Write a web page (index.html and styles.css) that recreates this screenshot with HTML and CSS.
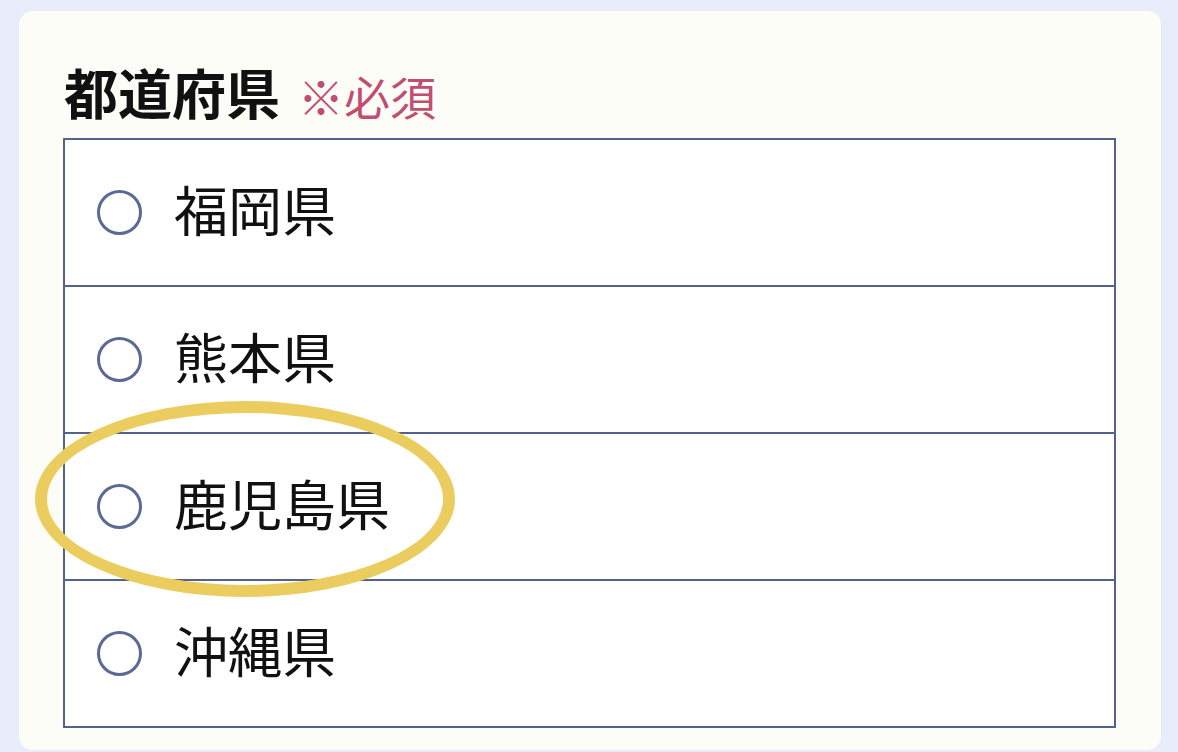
FILE: index.html
```html
<!DOCTYPE html>
<html lang="ja">

<head>
    <meta charset="UTF-8">
    <meta name="viewport" content="width=device-width, initial-scale=1.0">
    <title>都道府県</title>
    <link rel="stylesheet" href="styles.css">
</head>

<body>
    <div class="form-card">
        <div class="field-label">
            <span class="label-text">都道府県</span>
            <span class="required">※必須</span>
        </div>

        <div class="radio-list">
            <label class="radio-row">
                <input type="radio" name="pref" value="fukuoka">
                <span>福岡県</span>
            </label>
            <label class="radio-row">
                <input type="radio" name="pref" value="kumamoto">
                <span>熊本県</span>
            </label>
            <label class="radio-row">
                <input type="radio" name="pref" value="kagoshima">
                <span>鹿児島県</span>
            </label>
            <label class="radio-row">
                <input type="radio" name="pref" value="okinawa">
                <span>沖縄県</span>
            </label>
        </div>

        <div class="highlight"></div>
    </div>
</body>

</html>
```

FILE: styles.css
```css
body {
    font-family: "Noto Sans CJK JP", "Noto Sans", sans-serif;
    margin: 0;
    padding: 11px 17px 0 19px;
    background-color: #e8ecfb;
    overflow: hidden;
}

.form-card {
    position: relative;
    background: #fdfdf8;
    border-radius: 14px;
    padding: 54px 45px 22px 44px;
    height: 663px;
}

.field-label {
    display: flex;
    align-items: baseline;
    gap: 18px;
    height: 54px;
    line-height: 54px;
    margin-bottom: 19px;
    padding-left: 1px;
}

.label-text {
    font-size: 54px;
    font-weight: bold;
    color: #111;
}

.required {
    font-size: 46px;
    color: #c24d72;
}

.radio-list {
    border: 2px solid #52628b;
    background: #fff;
}

.radio-row {
    display: flex;
    align-items: center;
    gap: 32px;
    height: 145px;
    padding-left: 32px;
    font-size: 54px;
    color: #111;
    cursor: pointer;
}

.radio-row span {
    line-height: 1;
    margin-bottom: 8px;
}

.radio-row + .radio-row {
    border-top: 2px solid #52628b;
}

.radio-row input {
    appearance: none;
    margin: 0;
    width: 45px;
    height: 45px;
    border: 3px solid #5a6a95;
    border-radius: 50%;
    background: #fff;
    flex-shrink: 0;
}

.radio-row input:checked {
    background: radial-gradient(circle, #5a6a95 0 45%, #fff 48%);
}

/* hand-drawn marker ring around the third option */
.highlight {
    position: absolute;
    left: 16px;
    top: 390px;
    width: 396px;
    height: 172px;
    border: 12px solid #ebcd5f;
    border-radius: 50%;
    pointer-events: none;
}
```
